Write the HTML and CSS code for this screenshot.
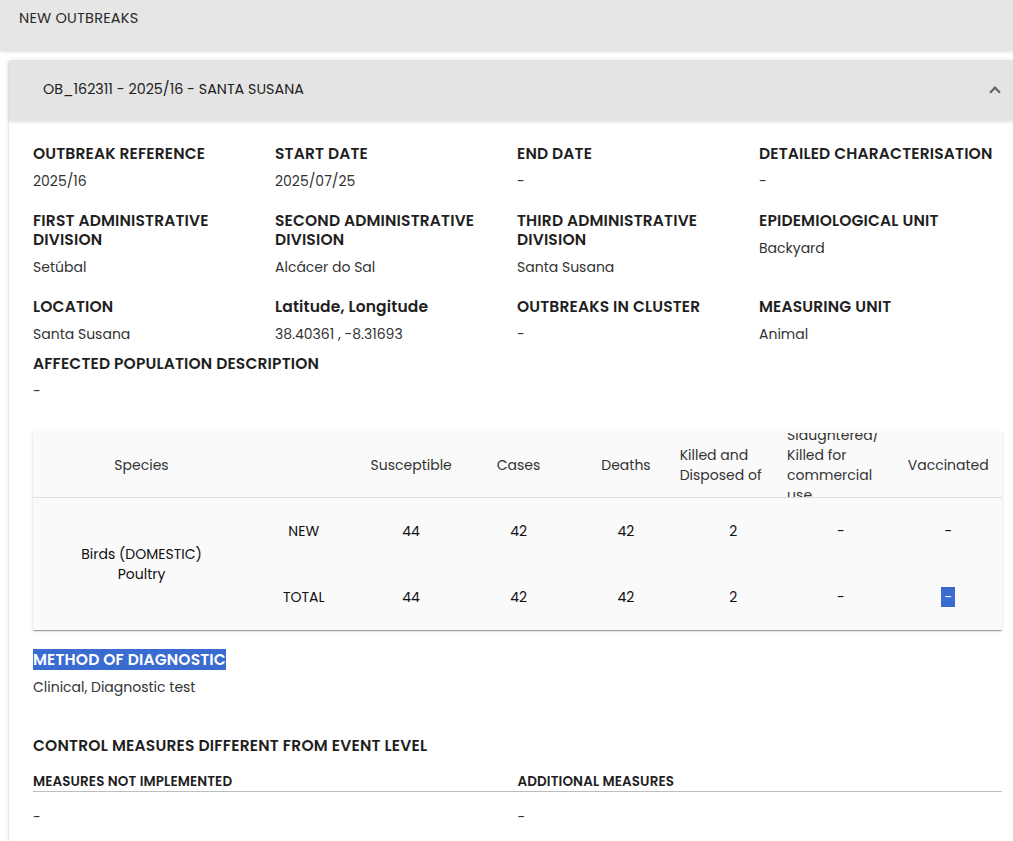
FILE: index.html
```html
<!DOCTYPE html>
<html lang="en">
<head>
<meta charset="utf-8">
<title>New outbreaks</title>
<link rel="stylesheet" href="styles.css">
</head>
<body>
<div class="page">
  <header class="section-bar">NEW OUTBREAKS</header>

  <section class="panel">
    <div class="panel-head">
      <span class="panel-title">OB_162311 - 2025/16 - SANTA SUSANA</span>
      <span class="chevron" aria-hidden="true"></span>
    </div>

    <div class="panel-body">
      <div class="fields">
        <div class="field"><div class="label">OUTBREAK REFERENCE</div><div class="value">2025/16</div></div>
        <div class="field"><div class="label">START DATE</div><div class="value">2025/07/25</div></div>
        <div class="field"><div class="label">END DATE</div><div class="value">-</div></div>
        <div class="field"><div class="label">DETAILED CHARACTERISATION</div><div class="value">-</div></div>

        <div class="field"><div class="label">FIRST ADMINISTRATIVE DIVISION</div><div class="value">Setúbal</div></div>
        <div class="field"><div class="label">SECOND ADMINISTRATIVE DIVISION</div><div class="value">Alcácer do Sal</div></div>
        <div class="field"><div class="label">THIRD ADMINISTRATIVE DIVISION</div><div class="value">Santa Susana</div></div>
        <div class="field"><div class="label">EPIDEMIOLOGICAL UNIT</div><div class="value">Backyard</div></div>

        <div class="field"><div class="label">LOCATION</div><div class="value">Santa Susana</div></div>
        <div class="field"><div class="label">Latitude, Longitude</div><div class="value">38.40361 , -8.31693</div></div>
        <div class="field"><div class="label">OUTBREAKS IN CLUSTER</div><div class="value">-</div></div>
        <div class="field"><div class="label">MEASURING UNIT</div><div class="value">Animal</div></div>
      </div>

      <div class="field field-wide">
        <div class="label">AFFECTED POPULATION DESCRIPTION</div>
        <div class="value">-</div>
      </div>

      <div class="table-card">
        <table class="species-table">
          <colgroup>
            <col class="col-species">
            <col><col><col><col><col><col><col>
          </colgroup>
          <thead>
            <tr>
              <th><div class="th-inner"><span>Species</span></div></th>
              <th><div class="th-inner"><span></span></div></th>
              <th><div class="th-inner"><span>Susceptible</span></div></th>
              <th><div class="th-inner"><span>Cases</span></div></th>
              <th><div class="th-inner"><span>Deaths</span></div></th>
              <th><div class="th-inner"><span>Killed and Disposed of</span></div></th>
              <th><div class="th-inner"><span>Slaughtered/ Killed for commercial use</span></div></th>
              <th><div class="th-inner"><span>Vaccinated</span></div></th>
            </tr>
          </thead>
          <tbody>
            <tr>
              <td rowspan="2" class="species">Birds (DOMESTIC)<br>Poultry</td>
              <td>NEW</td>
              <td>44</td>
              <td>42</td>
              <td>42</td>
              <td>2</td>
              <td>-</td>
              <td>-</td>
            </tr>
            <tr>
              <td>TOTAL</td>
              <td>44</td>
              <td>42</td>
              <td>42</td>
              <td>2</td>
              <td>-</td>
              <td><span class="selected">-</span></td>
            </tr>
          </tbody>
        </table>
      </div>

      <div class="field method">
        <div class="label"><span class="selected">METHOD OF DIAGNOSTIC</span></div>
        <div class="value">Clinical, Diagnostic test</div>
      </div>

      <h3 class="measures-title">CONTROL MEASURES DIFFERENT FROM EVENT LEVEL</h3>
      <div class="measures">
        <div class="measure-col">
          <div class="measure-label">MEASURES NOT IMPLEMENTED</div>
          <div class="measure-value">-</div>
        </div>
        <div class="measure-col">
          <div class="measure-label">ADDITIONAL MEASURES</div>
          <div class="measure-value">-</div>
        </div>
      </div>
    </div>
  </section>
</div>
</body>
</html>
```

FILE: styles.css
```css
html, body {
  margin: 0;
  padding: 0;
  background: #ffffff;
  overflow: hidden;
}

body {
  font-family: Poppins, "Open Sans", "Noto Sans", sans-serif;
  color: #222222;
}

.page {
  width: 1040px;
}

/* grey section bar at the top */
.section-bar {
  height: 50px;
  box-sizing: border-box;
  padding: 9px 19px 0;
  background: #e6e6e6;
  font-size: 14.5px;
  letter-spacing: 0.2px;
  line-height: 19px;
  color: #2a2a2a;
  box-shadow: 0 2px 3px rgba(0, 0, 0, 0.12);
}

/* expansion panel */
.panel {
  margin: 10px 0 0 9px;
  width: 1017px;
  background: #ffffff;
  box-shadow: 0 3px 1px -2px rgba(0, 0, 0, 0.2),
              0 2px 2px 0 rgba(0, 0, 0, 0.14),
              0 1px 5px 0 rgba(0, 0, 0, 0.12);
}

.panel-head {
  height: 60px;
  box-sizing: border-box;
  padding: 0 27px 2px 34px;
  display: flex;
  align-items: center;
  justify-content: space-between;
  background: #e4e4e4;
  box-shadow: 0 2px 3px rgba(0, 0, 0, 0.12);
  position: relative;
}

.panel-title {
  font-size: 14.3px;
  line-height: 20px;
  color: #222222;
}

.chevron {
  width: 6px;
  height: 6px;
  margin-top: 5px;
  border-left: 2px solid #5f5f5f;
  border-top: 2px solid #5f5f5f;
  transform: rotate(45deg);
}

.panel-body {
  padding: 24px 24px 30px;
}

/* field grid */
.fields {
  display: grid;
  grid-template-columns: repeat(4, 242px);
  row-gap: 20px;
}

.label {
  font-size: 15.5px;
  font-weight: 600;
  letter-spacing: 0.15px;
  line-height: 19px;
  color: #1f1f1f;
}

.value {
  margin-top: 9px;
  font-size: 14px;
  line-height: 19px;
  color: #333333;
}

.field-wide {
  margin-top: 10px;
}

/* species table */
.table-card {
  margin-top: 31px;
  background: #fafafa;
  box-shadow: 0 2px 1px -1px rgba(0, 0, 0, 0.2),
              0 1px 1px 0 rgba(0, 0, 0, 0.14),
              0 1px 3px 0 rgba(0, 0, 0, 0.12);
}

.species-table {
  width: 100%;
  table-layout: fixed;
  border-collapse: separate;
  border-spacing: 0;
}

.col-species {
  width: 217px;
}

.species-table th {
  height: 65px;
  padding: 0;
  font-weight: 400;
  font-size: 14px;
  color: #333333;
  border-bottom: 1px solid #dedede;
  vertical-align: middle;
}

.th-inner {
  height: 64px;
  display: flex;
  align-items: center;
  justify-content: center;
  overflow: hidden;
  line-height: 20px;
}

.th-inner span {
  text-align: left;
}

.species-table td {
  height: 66px;
  padding: 0;
  text-align: center;
  font-size: 14px;
  font-weight: 400;
  line-height: 20px;
  color: #111111;
}

.species-table td.species {
  height: auto;
}

.selected {
  background: #3a6bd1;
  color: #ffffff;
}

.species-table td .selected {
  display: inline-block;
  padding: 0 3px;
}

.method {
  margin-top: 20px;
}

.method .label {
  line-height: 20px;
}

.method .value {
  margin-top: 8px;
}

/* control measures */
.measures-title {
  margin: 39px 0 0;
  font-size: 15.5px;
  font-weight: 600;
  letter-spacing: 0.2px;
  line-height: 19px;
  color: #1f1f1f;
}

.measures {
  margin-top: 18px;
  display: grid;
  grid-template-columns: 1fr 1fr;
}

.measure-label {
  font-size: 13.5px;
  font-weight: 600;
  letter-spacing: 0.1px;
  line-height: 18px;
  color: #1f1f1f;
  border-bottom: 1px solid #bdbdbd;
}

.measure-value {
  margin-top: 16px;
  font-size: 14px;
  line-height: 19px;
  color: #333333;
}
```
